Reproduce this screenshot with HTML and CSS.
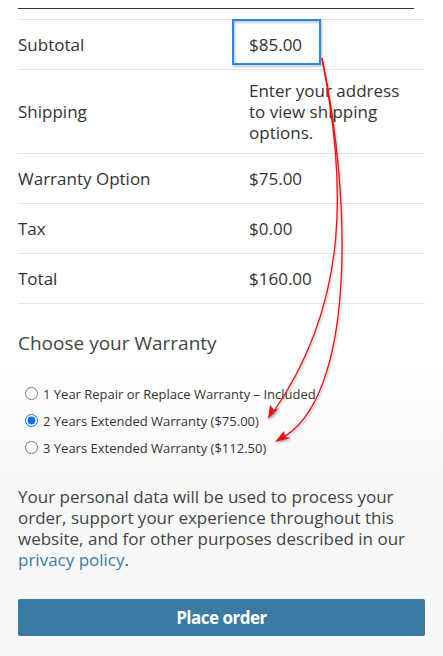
FILE: index.html
```html
<!DOCTYPE html>
<html lang="en">
<head>
<meta charset="utf-8">
<title>Checkout</title>
<link rel="stylesheet" href="styles.css">
</head>
<body>
<div class="page">
  <div class="topline"></div>
  <table class="totals">
    <tr><td class="label">Subtotal</td><td class="value">$85.00</td></tr>
    <tr><td class="label">Shipping</td><td class="value">Enter your address to view shipping options.</td></tr>
    <tr><td class="label">Warranty Option</td><td class="value">$75.00</td></tr>
    <tr><td class="label">Tax</td><td class="value">$0.00</td></tr>
    <tr class="last"><td class="label">Total</td><td class="value">$160.00</td></tr>
  </table>

  <section class="warranty">
    <h3 class="warranty-title">Choose your Warranty</h3>
    <ul class="options">
      <li><label class="opt"><input type="radio" name="w"> 1 Year Repair or Replace Warranty – Included</label></li>
      <li><label class="opt"><input type="radio" name="w" checked> 2 Years Extended Warranty ($75.00)</label></li>
      <li><label class="opt"><input type="radio" name="w"> 3 Years Extended Warranty ($112.50)</label></li>
    </ul>
  </section>

  <p class="privacy">Your personal data will be used to process your order, support your experience throughout this website, and for other purposes described in our <a href="#">privacy policy</a>.</p>

  <button class="place" type="button">Place order</button>
</div>

<svg class="annot" width="443" height="656" viewBox="0 0 443 656" xmlns="http://www.w3.org/2000/svg">
  <defs>
    <filter id="sh" x="-20%" y="-20%" width="140%" height="140%">
      <feDropShadow dx="1" dy="1.5" stdDeviation="1.2" flood-color="#000" flood-opacity="0.3"/>
    </filter>
  </defs>
  <rect x="233" y="20" width="87" height="44" fill="none" stroke="#2b88e0" stroke-width="2" filter="url(#sh)"/>
  <g filter="url(#sh)" fill="none" stroke="#e0141a" stroke-width="1.3">
    <path d="M322 58 C 345 180 352 300 272 414"/>
    <path d="M322 58 C 352 200 356 400 280 439"/>
  </g>
  <g filter="url(#sh)" fill="#e0141a">
    <polygon points="268,419 270,405 274,410 279,408"/>
    <polygon points="275,442 284,431 285,437 291,438"/>
  </g>
</svg>
</body>
</html>
```

FILE: styles.css
```css
html, body {
  margin: 0;
  padding: 0;
}
body {
  width: 443px;
  height: 656px;
  overflow: hidden;
  position: relative;
  font-family: "Open Sans", "Liberation Sans", sans-serif;
  color: #333;
  background: linear-gradient(to bottom, #ffffff 0px, #ffffff 360px, #f7f8f8 470px, #f6f7f7 656px);
}
.page {
  padding: 8px 18px 0 18px;
}
.topline {
  height: 0;
  border-top: 1px solid #333;
  margin-right: 11px;
}
.totals {
  width: 100%;
  margin-top: 10px;
  border-collapse: collapse;
  font-size: 17px;
  line-height: 21px;
}
.totals td {
  border-top: 1px solid #e4e4e4;
  padding: 10px 0;
  height: 29px;
  vertical-align: middle;
}
.totals tr.last td {
  border-bottom: 1px solid #e4e4e4;
}
.totals .label {
  width: 231px;
}
.totals .value {
  padding-right: 20px;
}
.warranty-title {
  margin: 27px 0 0 0;
  font-size: 19px;
  line-height: 24px;
  font-weight: 400;
  color: #444;
}
.options {
  list-style: none;
  margin: 25px 0 0 0;
  padding: 0 0 0 7px;
  font-size: 13px;
  color: #333;
}
.options li {
  height: 27px;
  display: flex;
  align-items: center;
}
.opt {
  display: flex;
  align-items: center;
  gap: 5px;
}
.opt input {
  margin: 0;
  width: 13px;
  height: 13px;
  accent-color: #0b6ef0;
}
.privacy {
  margin: 25px 0 0 0;
  font-size: 17px;
  line-height: 21px;
  color: #444;
}
.privacy a {
  color: #3e7aa2;
  text-decoration: none;
}
.place {
  display: block;
  width: 100%;
  margin-top: 29px;
  height: 37px;
  border: none;
  border-radius: 2px;
  background: #3b7aa3;
  color: #fff;
  font-family: "Open Sans", "Liberation Sans", sans-serif;
  font-size: 17px;
  font-weight: 700;
  letter-spacing: -0.5px;
}
.annot {
  position: absolute;
  top: 0;
  left: 0;
  pointer-events: none;
}
```
